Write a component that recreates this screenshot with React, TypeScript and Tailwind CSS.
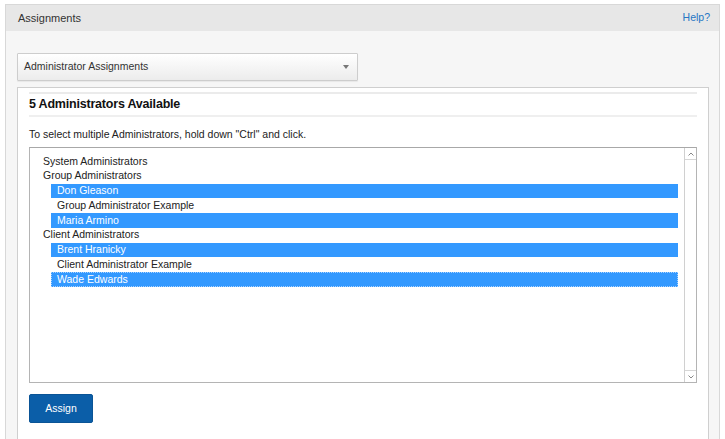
import React from "react";

type Row = { label: string; kind: "group" | "opt"; selected?: boolean; focus?: boolean };

const rows: Row[] = [
  { label: "System Administrators", kind: "group" },
  { label: "Group Administrators", kind: "group" },
  { label: "Don Gleason", kind: "opt", selected: true },
  { label: "Group Administrator Example", kind: "opt" },
  { label: "Maria Armino", kind: "opt", selected: true },
  { label: "Client Administrators", kind: "group" },
  { label: "Brent Hranicky", kind: "opt", selected: true },
  { label: "Client Administrator Example", kind: "opt" },
  { label: "Wade Edwards", kind: "opt", selected: true, focus: true },
];

export default function App() {
  return (
    <div
      className="h-[439px] w-[725px] overflow-hidden bg-white pt-[4px] pl-[5px] text-[#222]"
      style={{ fontFamily: '"Liberation Sans", Arial, sans-serif' }}
    >
      <div className="flex h-[500px] w-[715px] flex-col border border-[#d8d8d8] bg-[#f6f6f6]">
        {/* header */}
        <div className="flex h-[26px] shrink-0 items-center justify-between bg-[#e7e7e7] pl-[12px] pr-[9px]">
          <span className="text-[11px] text-[#333]">Assignments</span>
          <span className="text-[10.5px] text-[#2676c4]">Help?</span>
        </div>

        {/* body */}
        <div className="pl-[11px] pr-[10px] pt-[22px]">
          {/* select */}
          <div className="flex h-[28px] w-[341px] items-center justify-between rounded-[1px] border border-[#cdcdcd] bg-gradient-to-b from-white to-[#ececec] pl-[6px] pr-[8px] shadow-[0_1px_1px_rgba(0,0,0,0.06)]">
            <span className="text-[10.5px] text-[#333]">Administrator Assignments</span>
            <svg width="6" height="4" viewBox="0 0 6 4">
              <path d="M0 0 L6 0 L3 4 Z" fill="#777" />
            </svg>
          </div>

          {/* inner panel */}
          <div className="mt-[6px] h-[400px] w-[692px] border border-[#cfcfcf] bg-white pl-[11px] pr-[11px]">
            <div className="mt-[4px] h-[2px] w-full bg-[#ebebeb]" />
            <div className="flex h-[21px] items-center text-[12.5px] font-bold tracking-[-0.2px] text-[#111]">
              5 Administrators Available
            </div>
            <div className="h-[2px] w-full bg-[#efefef]" />

            <div className="mt-[10px] text-[10.5px] leading-[14px] text-[#222]">
              To select multiple Administrators, hold down "Ctrl" and click.
            </div>

            {/* listbox */}
            <div className="mt-[6px] flex h-[236px] w-[668px] border border-[#b4b4b4] border-t-[#a8a8a8] bg-white">
              <div className="flex-1 pl-[13px] pr-[6px] pt-[6px]">
                {rows.map((r, i) =>
                  r.kind === "group" ? (
                    <div key={i} className="flex h-[14.75px] items-center text-[10.5px] text-[#222]">
                      {r.label}
                    </div>
                  ) : (
                    <div
                      key={i}
                      className={
                        "ml-[8px] flex h-[14.75px] items-center pl-[6px] text-[10.5px] " +
                        (r.selected ? "bg-[#3399ff] text-white" : "text-[#222]") +
                        (r.focus ? " outline outline-1 outline-dotted outline-[#a8d2ff] -outline-offset-1" : "")
                      }
                    >
                      {r.label}
                    </div>
                  )
                )}
              </div>
              {/* scrollbar */}
              <div className="flex w-[12px] flex-col justify-between border-l border-[#d0d0d0] bg-white">
                <div className="flex h-[12px] items-center justify-center border-b border-[#d6d6d6]">
                  <svg width="6" height="4" viewBox="0 0 6 4">
                    <path d="M0.5 3.5 L3 1 L5.5 3.5" fill="none" stroke="#888" strokeWidth="1" />
                  </svg>
                </div>
                <div className="flex h-[12px] items-center justify-center border-t border-[#d6d6d6]">
                  <svg width="6" height="4" viewBox="0 0 6 4">
                    <path d="M0.5 0.5 L3 3 L5.5 0.5" fill="none" stroke="#888" strokeWidth="1" />
                  </svg>
                </div>
              </div>
            </div>

            {/* button */}
            <button className="mt-[11px] flex h-[29px] w-[64px] items-center justify-center rounded-[2px] border border-[#0a5496] bg-[#0b5ea8] text-[10.5px] text-white">
              Assign
            </button>
          </div>
        </div>
      </div>
    </div>
  );
}
